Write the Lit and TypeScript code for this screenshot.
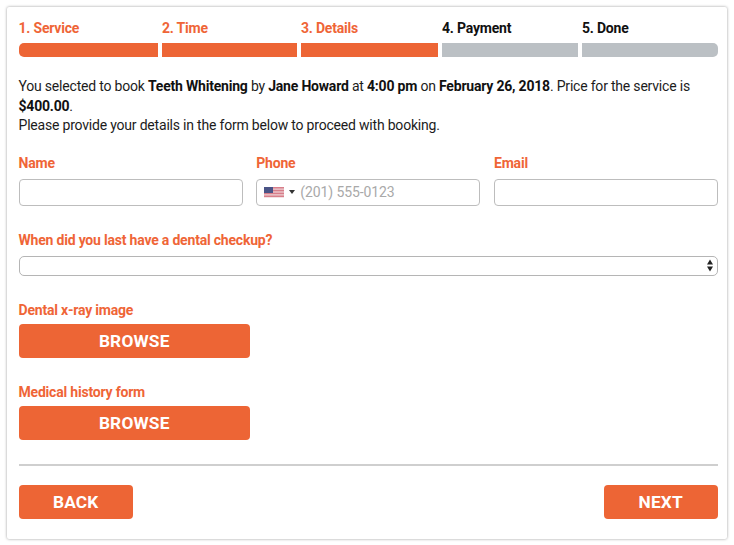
import { LitElement, html, css, svg } from "lit";
import { customElement } from "lit/decorators.js";

const steps = [
  { t: "1. Service", on: true },
  { t: "2. Time", on: true },
  { t: "3. Details", on: true },
  { t: "4. Payment", on: false },
  { t: "5. Done", on: false },
];

const stripes = [0, 1, 2, 3, 4, 5, 6].map(
  (i) => svg`<rect x="0" y="${i * 1.54}" width="20" height="0.77" fill="#d0606f"/>`
);

@customElement("app-root")
export class AppRoot extends LitElement {
  static styles = css`
    :host {
      display: block;
      width: 734px;
      height: 545px;
      background: #fff;
      font-family: Roboto, "Liberation Sans", sans-serif;
      font-size: 14px;
      color: #1a1a1a;
      box-sizing: border-box;
      padding: 7px 7px 6px 7px;
    }
    .card {
      height: 532px;
      width: 720px;
      box-sizing: border-box;
      background: #fff;
      border-radius: 2px;
      box-shadow: 0 0 3px rgba(0, 0, 0, 0.4);
      padding: 13px 9px 0 11.5px;
    }
    .steps {
      display: grid;
      grid-template-columns: 139.5px 135px 137px 136px 136px;
      column-gap: 4px;
    }
    .step-label {
      font-weight: 700;
      font-size: 14px;
      letter-spacing: -0.2px;
      line-height: 17px;
      color: #111;
      margin-bottom: 6px;
    }
    .step-label.on { color: #ef6537; }
    .bar { height: 14px; background: #bbc0c4; }
    .bar.on { background: #ed6535; }
    .step:first-child .bar { border-radius: 5px 0 0 5px; }
    .step:last-child .bar { border-radius: 0 5px 5px 0; }
    .info {
      margin: 20px 0 0;
      font-size: 14px;
      letter-spacing: -0.2px;
      line-height: 19.5px;
      color: #1c1c1c;
    }
    b { font-weight: 700; color: #111; }
    .row {
      display: grid;
      grid-template-columns: 224px 224px 224px;
      column-gap: 13.75px;
      margin-top: 19px;
    }
    label {
      display: block;
      font-weight: 700;
      font-size: 14px;
      letter-spacing: -0.2px;
      line-height: 17px;
      color: #ef6537;
    }
    .input {
      display: flex;
      align-items: center;
      box-sizing: border-box;
      height: 27px;
      margin-top: 7px;
      border: 1px solid #bdbdbd;
      border-radius: 4px;
      background: #fff;
      color: #a9a9a9;
      font-size: 14px;
      letter-spacing: -0.1px;
    }
    .flag { margin-left: 7px; display: block; }
    .caret {
      width: 0;
      height: 0;
      margin: 0 5px 0 5px;
      border-left: 3px solid transparent;
      border-right: 3px solid transparent;
      border-top: 4px solid #333;
    }
    .sel-block { margin-top: 26px; }
    .select {
      display: flex;
      align-items: center;
      justify-content: flex-end;
      box-sizing: border-box;
      height: 20px;
      margin-top: 7px;
      border: 1px solid #b5b5b5;
      border-radius: 5px;
      padding-right: 4px;
    }
    .upload { margin-top: 26px; }
    .btn {
      display: flex;
      align-items: center;
      justify-content: center;
      box-sizing: border-box;
      background: #ed6535;
      color: #fff;
      font-weight: 700;
      font-size: 17.3px;
      letter-spacing: 0.2px;
      border-radius: 4px;
      height: 34px;
    }
    .browse { width: 231.5px; margin-top: 5px; }
    hr {
      border: 0;
      height: 2px;
      background: #cfcfcf;
      margin: 24px 0 0;
    }
    .nav {
      display: flex;
      justify-content: space-between;
      margin-top: 19px;
    }
    .nav .btn { width: 114.5px; }
  `;

  render() {
    return html`
      <div class="card">
        <div class="steps">
          ${steps.map(
            (s) => html`<div class="step">
              <div class="step-label ${s.on ? "on" : ""}">${s.t}</div>
              <div class="bar ${s.on ? "on" : ""}"></div>
            </div>`
          )}
        </div>
        <p class="info">
          You selected to book <b>Teeth Whitening</b> by <b>Jane Howard</b> at
          <b>4:00 pm</b> on <b>February 26, 2018</b>. Price for the service is
          <b>$400.00</b>.<br />Please provide your details in the form below to
          proceed with booking.
        </p>
        <div class="row">
          <div><label>Name</label><div class="input"></div></div>
          <div>
            <label>Phone</label>
            <div class="input">
              <svg class="flag" width="20" height="11" viewBox="0 0 20 11">
                <rect width="20" height="11" fill="#f2e4e6" />
                ${stripes}
                <rect width="9" height="6" fill="#4a5486" />
              </svg>
              <span class="caret"></span>
              <span>(201) 555-0123</span>
            </div>
          </div>
          <div><label>Email</label><div class="input"></div></div>
        </div>
        <div class="sel-block">
          <label>When did you last have a dental checkup?</label>
          <div class="select">
            <svg width="6" height="13" viewBox="0 0 6 13">
              <path d="M3 0.5 L6 5.5 H0 Z M0 7.5 H6 L3 12.5 Z" fill="#222" />
            </svg>
          </div>
        </div>
        <div class="upload">
          <label>Dental x-ray image</label>
          <div class="btn browse">BROWSE</div>
        </div>
        <div class="upload">
          <label>Medical history form</label>
          <div class="btn browse">BROWSE</div>
        </div>
        <hr />
        <div class="nav">
          <div class="btn">BACK</div>
          <div class="btn">NEXT</div>
        </div>
      </div>
    `;
  }
}
